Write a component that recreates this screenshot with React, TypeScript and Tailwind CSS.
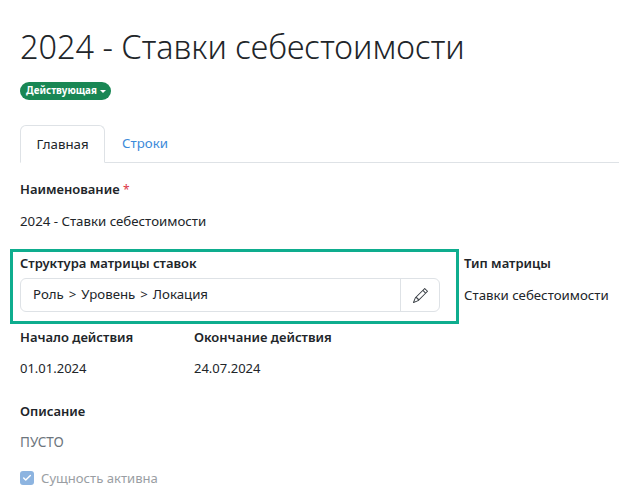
import { Check } from "lucide-react";
import { BsPencil } from "react-icons/bs";

const font = { fontFamily: '"Noto Sans", "Open Sans", sans-serif' };

function Label({ children }: { children: React.ReactNode }) {
  return <div className="text-[13px] leading-[20px] font-semibold text-[#212529]">{children}</div>;
}

function Value({ children }: { children: React.ReactNode }) {
  return <div className="mt-[11px] text-[13.25px] leading-[20px] text-[#212529]">{children}</div>;
}

export default function App() {
  return (
    <div style={font} className="relative h-[499px] w-[619px] overflow-hidden bg-white pl-5 text-[#212529]">
      <h1 className="pt-[24px] text-[32.4px] leading-[44px] font-light whitespace-nowrap">2024 - Ставки себестоимости</h1>

      <div className="mt-[14px] flex">
        <span className="flex h-[18px] w-[91px] items-center justify-center gap-[3px] rounded-full bg-[#198754] pl-[1px] text-[9.8px] font-bold text-white">
          Действующая
          <span className="border-x-[3px] border-t-[3px] border-x-transparent border-t-white" />
        </span>
      </div>

      <div className="mt-[25px] flex h-[38px] border-b border-[#dee2e6] text-[13.25px]">
        <div className="-mb-px flex h-[38px] w-[85px] items-center justify-center rounded-t-[6px] border border-b-white border-[#dee2e6] bg-white pt-[1px]">Главная</div>
        <div className="flex w-[80px] items-center justify-center pt-[1px] text-[#3b8ad9]">Строки</div>
      </div>

      <div className="mt-[16px]">
        <Label>
          Наименование <span className="text-[12px] font-normal text-[#dc3545]">*</span>
        </Label>
        <Value>2024 - Ставки себестоимости</Value>
      </div>

      <div className="mt-[22px] flex">
        <div className="w-[420px]">
          <Label>Структура матрицы ставок</Label>
          <div className="mt-[5px] flex h-[34px] items-center rounded-[6px] border border-[#dee2e6] text-[13.25px]">
            <span className="flex-1 pl-3 [word-spacing:1.5px]">Роль &gt; Уровень &gt; Локация</span>
            <span className="flex h-full w-[39px] items-center justify-center border-l border-[#dee2e6]">
              <BsPencil size={15} className="text-[#343a40]" />
            </span>
          </div>
        </div>
        <div className="ml-[24px]">
          <Label>Тип матрицы</Label>
          <div className="mt-[12px] text-[13.25px] leading-[20px] whitespace-nowrap">Ставки себестоимости</div>
        </div>
      </div>

      <div className="mt-[15px] flex">
        <div className="w-[174px]">
          <Label>Начало действия</Label>
          <div className="mt-[11px] text-[13px] leading-[20px]">01.01.2024</div>
        </div>
        <div>
          <Label>Окончание действия</Label>
          <div className="mt-[11px] text-[13px] leading-[20px]">24.07.2024</div>
        </div>
      </div>

      <div className="mt-[23px]">
        <Label>Описание</Label>
        <div className="mt-[11px] text-[13.5px] leading-[20px] text-[#6c757d]">ПУСТО</div>
      </div>

      <div className="mt-[16px] flex items-center gap-[7px] text-[13.1px] leading-[20px] text-[#9a9ea3]">
        <span className="flex h-[14px] w-[14px] items-center justify-center rounded-[3px] bg-[#8db4e0]">
          <Check size={10} strokeWidth={3.5} className="text-white" />
        </span>
        Сущность активна
      </div>

      {/* annotation frame drawn over the form */}
      <div className="pointer-events-none absolute top-[249px] left-[10px] h-[75px] w-[449px] border-[3px] border-[#0ead8e]" />
    </div>
  );
}
